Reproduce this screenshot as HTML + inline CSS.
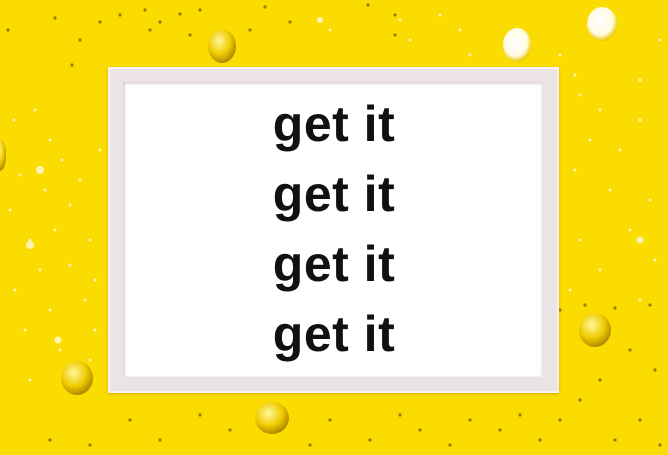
<!DOCTYPE html>
<html><head><meta charset="utf-8"><style>
html,body{margin:0;padding:0}
body{width:668px;height:455px;overflow:hidden;position:relative;background:#fbdc00;font-family:"Liberation Sans",sans-serif}
svg{position:absolute;left:0;top:0}
.frame{position:absolute;left:108px;top:67px;width:451px;height:326px;background:#ece3e4;box-shadow:inset 0 0 0 2px #f6f1f1, 0 1px 3px rgba(120,90,0,.35)}
.inner{position:absolute;left:123px;top:82px;width:419px;height:295px;background:#fff;box-shadow:inset 1px 1px 3px rgba(150,130,130,.5)}
.t{position:absolute;left:0;width:668px;text-align:center;font-weight:bold;font-size:50px;line-height:50px;color:#111;letter-spacing:0.5px}
</style></head><body>
<svg width="668" height="455">
<defs>
<radialGradient id="c1" cx="40%" cy="35%" r="65%"><stop offset="0" stop-color="#fff7a0"/><stop offset=".6" stop-color="#f0cc00"/><stop offset="1" stop-color="#b08a00"/></radialGradient>
<radialGradient id="c2" cx="45%" cy="40%" r="60%"><stop offset="0" stop-color="#ffffff"/><stop offset=".7" stop-color="#fffbe0"/><stop offset="1" stop-color="#e8c800"/></radialGradient>
</defs>
<g fill="#fff8c8" opacity=".9">
<circle cx="14" cy="120" r="1.5"/><circle cx="35" cy="110" r="1.5"/><circle cx="50" cy="140" r="1.5"/><circle cx="62" cy="160" r="1.5"/><circle cx="20" cy="175" r="1.5"/><circle cx="45" cy="190" r="1.5"/><circle cx="70" cy="205" r="1.5"/><circle cx="10" cy="210" r="1.5"/><circle cx="80" cy="180" r="1.5"/><circle cx="30" cy="240" r="1.5"/><circle cx="55" cy="230" r="1.5"/><circle cx="90" cy="240" r="1.5"/><circle cx="40" cy="270" r="1.5"/><circle cx="70" cy="265" r="1.5"/><circle cx="15" cy="290" r="1.5"/><circle cx="85" cy="300" r="1.5"/><circle cx="50" cy="310" r="1.5"/><circle cx="25" cy="330" r="1.5"/><circle cx="95" cy="330" r="1.5"/><circle cx="60" cy="350" r="1.5"/><circle cx="30" cy="380" r="1.5"/><circle cx="90" cy="360" r="1.5"/><circle cx="100" cy="150" r="1.5"/><circle cx="95" cy="280" r="1.5"/>
<circle cx="330" cy="30" r="1.5"/><circle cx="400" cy="20" r="1.5"/><circle cx="410" cy="40" r="1.5"/><circle cx="440" cy="15" r="1.5"/><circle cx="460" cy="30" r="1.5"/><circle cx="470" cy="55" r="1.5"/><circle cx="560" cy="55" r="1.5"/><circle cx="575" cy="75" r="1.5"/><circle cx="580" cy="95" r="1.5"/><circle cx="600" cy="110" r="1.5"/><circle cx="590" cy="140" r="1.5"/><circle cx="620" cy="150" r="1.5"/><circle cx="640" cy="120" r="1.5"/><circle cx="575" cy="170" r="1.5"/><circle cx="610" cy="190" r="1.5"/><circle cx="650" cy="200" r="1.5"/><circle cx="630" cy="230" r="1.5"/><circle cx="580" cy="240" r="1.5"/><circle cx="600" cy="270" r="1.5"/><circle cx="655" cy="260" r="1.5"/><circle cx="570" cy="290" r="1.5"/><circle cx="640" cy="300" r="1.5"/><circle cx="660" cy="40" r="1.5"/><circle cx="640" cy="80" r="1.5"/>
<circle cx="30" cy="245" r="4"/><circle cx="40" cy="170" r="4"/><circle cx="58" cy="340" r="3.5"/><circle cx="320" cy="20" r="3"/><circle cx="640" cy="240" r="3.5"/>
</g>
<g fill="#7a5a00" opacity=".75">
<circle cx="8" cy="30" r="1.6"/><circle cx="55" cy="18" r="1.6"/><circle cx="100" cy="22" r="1.6"/><circle cx="120" cy="15" r="1.6"/><circle cx="145" cy="10" r="1.6"/><circle cx="150" cy="30" r="1.6"/><circle cx="160" cy="22" r="1.6"/><circle cx="180" cy="14" r="1.6"/><circle cx="190" cy="35" r="1.6"/><circle cx="200" cy="10" r="1.6"/><circle cx="250" cy="30" r="1.6"/><circle cx="265" cy="7" r="1.6"/><circle cx="290" cy="22" r="1.6"/><circle cx="368" cy="5" r="1.6"/><circle cx="395" cy="15" r="1.6"/><circle cx="395" cy="35" r="1.6"/><circle cx="80" cy="40" r="1.6"/><circle cx="72" cy="65" r="1.6"/>
<circle cx="560" cy="310" r="1.6"/><circle cx="585" cy="305" r="1.6"/><circle cx="615" cy="308" r="1.6"/><circle cx="650" cy="305" r="1.6"/><circle cx="630" cy="350" r="1.6"/><circle cx="655" cy="370" r="1.6"/><circle cx="600" cy="380" r="1.6"/><circle cx="580" cy="400" r="1.6"/><circle cx="560" cy="420" r="1.6"/><circle cx="520" cy="415" r="1.6"/><circle cx="540" cy="440" r="1.6"/><circle cx="500" cy="430" r="1.6"/><circle cx="470" cy="420" r="1.6"/><circle cx="450" cy="445" r="1.6"/><circle cx="420" cy="430" r="1.6"/><circle cx="400" cy="415" r="1.6"/><circle cx="370" cy="440" r="1.6"/><circle cx="330" cy="420" r="1.6"/><circle cx="310" cy="445" r="1.6"/><circle cx="230" cy="430" r="1.6"/><circle cx="200" cy="415" r="1.6"/><circle cx="160" cy="440" r="1.6"/><circle cx="130" cy="420" r="1.6"/><circle cx="90" cy="445" r="1.6"/><circle cx="50" cy="440" r="1.6"/><circle cx="640" cy="420" r="1.6"/><circle cx="615" cy="440" r="1.6"/><circle cx="660" cy="445" r="1.6"/>
</g>
<ellipse cx="222" cy="46" rx="14" ry="17" fill="url(#c1)"/>
<ellipse cx="517" cy="45" rx="14" ry="17" fill="url(#c2)"/>
<ellipse cx="602" cy="24" rx="15" ry="17" fill="url(#c2)"/>
<ellipse cx="595" cy="330" rx="16" ry="17" fill="url(#c1)"/>
<ellipse cx="77" cy="378" rx="16" ry="17" fill="url(#c1)"/>
<ellipse cx="272" cy="418" rx="17" ry="16" fill="url(#c1)"/>
<ellipse cx="0" cy="155" rx="6" ry="16" fill="url(#c1)"/>
</svg>
<div class="frame"></div>
<div class="inner"></div>
<div class="t" style="top:99px">get it</div>
<div class="t" style="top:169px">get it</div>
<div class="t" style="top:239px">get it</div>
<div class="t" style="top:309px">get it</div>
</body></html>
